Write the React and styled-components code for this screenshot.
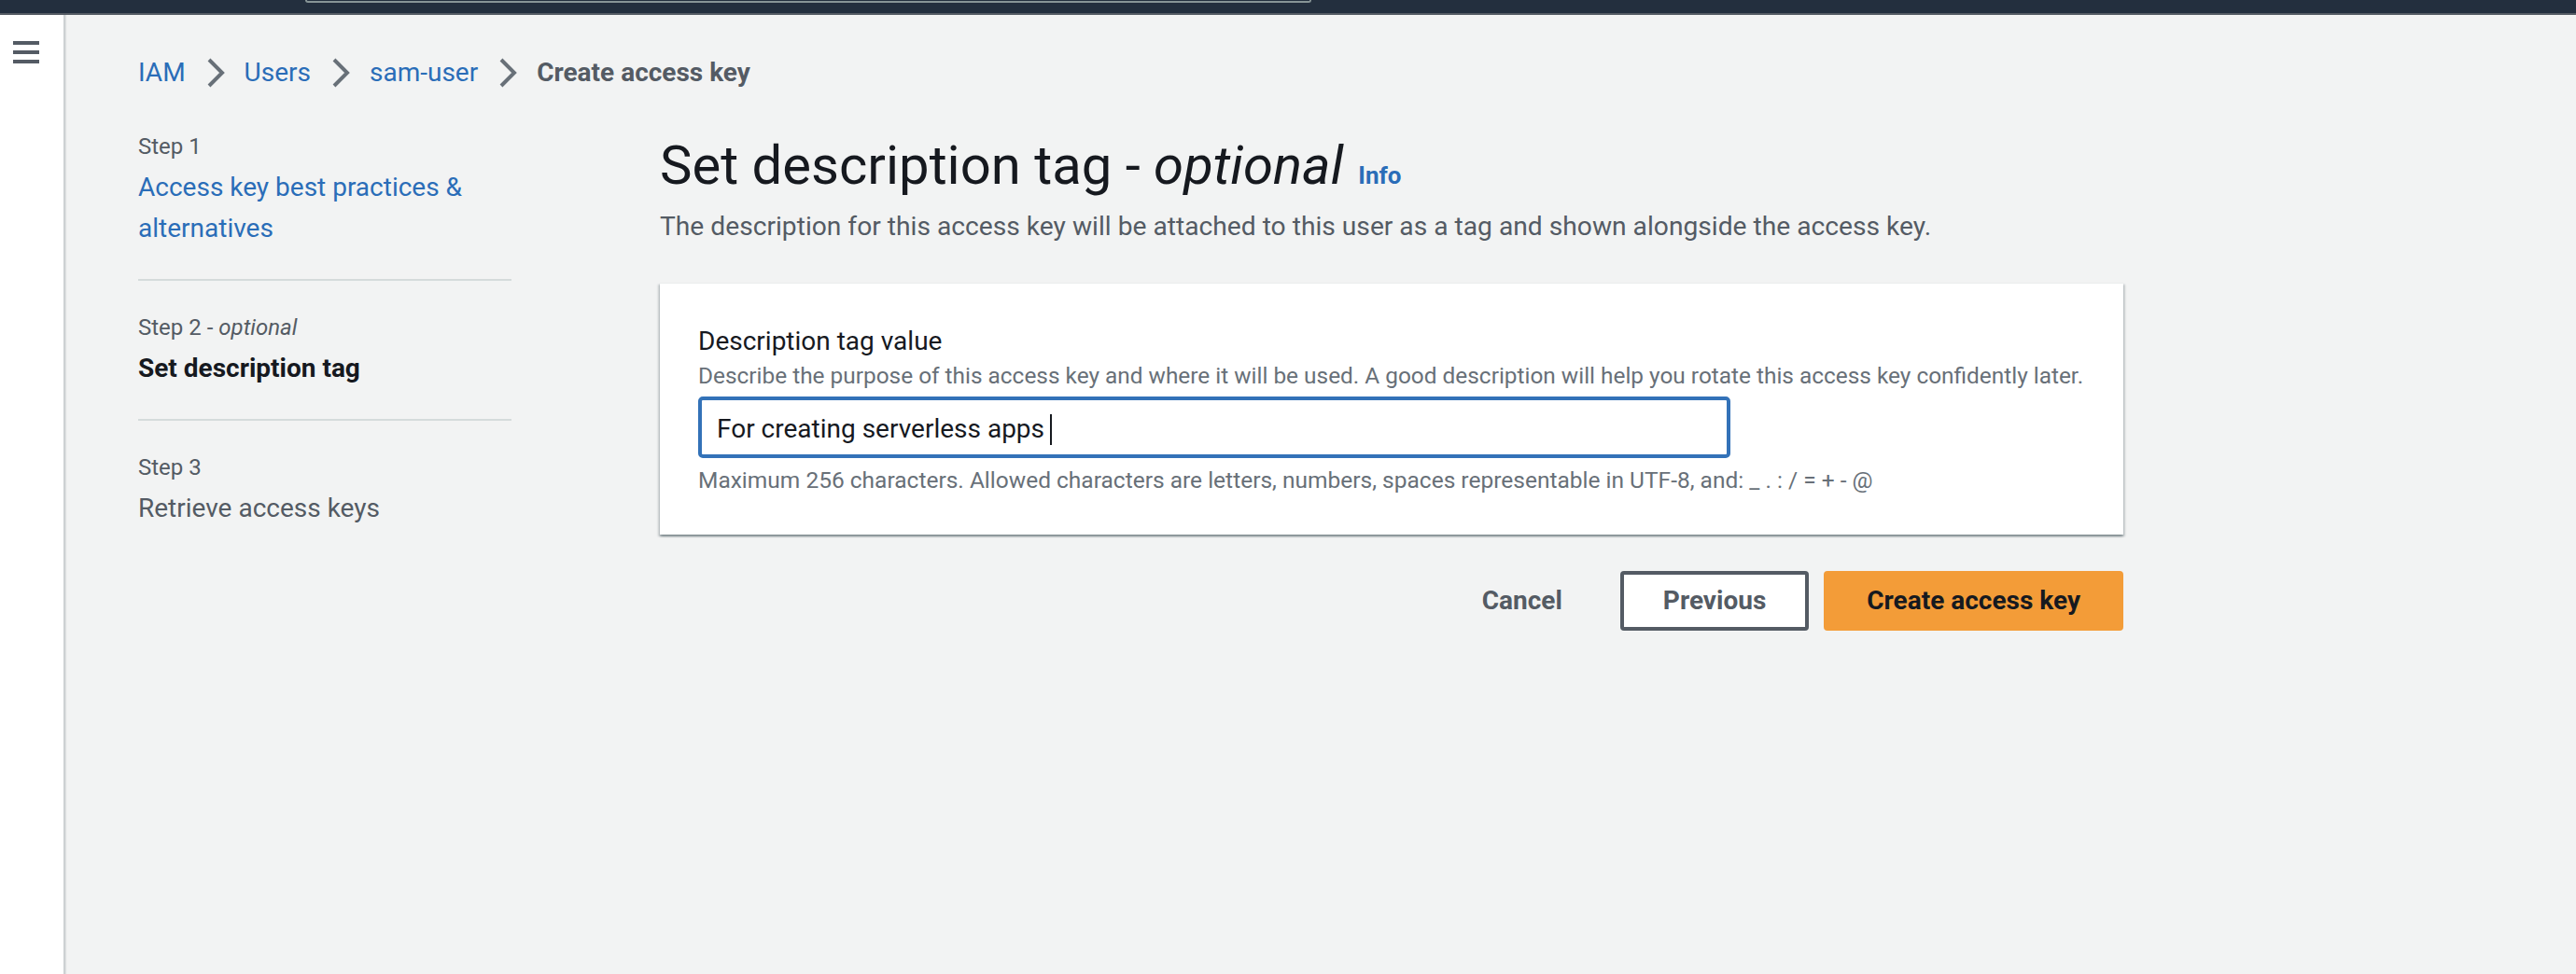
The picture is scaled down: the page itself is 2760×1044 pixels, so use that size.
import React from "react";
import styled, { createGlobalStyle } from "styled-components";

const Global = createGlobalStyle`
  html, body { margin: 0; padding: 0; height: 100%; }
  body {
    background: #f2f3f3;
    font-family: Roboto, "Liberation Sans", Arial, sans-serif;
    color: #16191f;
  }
  #root { min-height: 100vh; }
  * { box-sizing: border-box; }
`;

const Page = styled.div`
  display: flex;
  flex-direction: column;
  min-height: 100vh;
`;

const TopBar = styled.header`
  height: 16px;
  background: #232f3e;
  border-bottom: 2px solid #545b64;
  display: flex;
  align-items: flex-start;
  flex-shrink: 0;
`;

const SearchStub = styled.div`
  margin-left: 327px;
  width: 1078px;
  height: 3px;
  border: 2px solid #879596;
  border-top: none;
  border-radius: 0 0 6px 6px;
`;

const Body = styled.div`
  flex: 1;
  display: flex;
`;

const SideRail = styled.aside`
  width: 70px;
  flex-shrink: 0;
  background: #ffffff;
  border-right: 2px solid #cdd1d3;
  box-shadow: 1px 0 1px rgba(0, 28, 36, 0.08);
  padding: 28px 0 0 14px;
`;

const MenuButton = styled.button`
  display: block;
  border: none;
  background: none;
  padding: 0;
  cursor: pointer;
`;

const Main = styled.main`
  flex: 1;
  padding: 40px 0 0 78px;
`;

const Breadcrumbs = styled.nav`
  display: flex;
  align-items: center;
  font-size: 28px;
  line-height: 44px;
`;

const Crumb = styled.a`
  color: ${(p) => (p.$current ? "#545b64" : "#2a6db8")};
  font-weight: ${(p) => (p.$current ? 700 : 400)};
  text-decoration: none;
`;

const CrumbSep = styled.svg`
  width: 20px;
  height: 32px;
  margin: 0 21px 0 22px;
  flex-shrink: 0;
`;

const Wizard = styled.div`
  display: grid;
  grid-template-columns: 400px 1568px;
  column-gap: 159px;
  margin-top: 41px;
  align-items: start;
`;

const StepList = styled.ol`
  list-style: none;
  margin: 0;
  padding: 0;
`;

const StepItem = styled.li`
  padding: ${(p) => (p.$first ? "0" : "34px")} 0 ${(p) => (p.$last ? "0" : "32px")};
  border-bottom: ${(p) => (p.$last ? "none" : "2px solid #d5dbdb")};
`;

const StepLabel = styled.div`
  font-size: 24px;
  line-height: 32px;
  color: #545b64;
  em { font-style: italic; }
`;

const StepTitle = styled.div`
  margin-top: 6px;
  font-size: 28px;
  line-height: 44px;
  color: ${(p) => (p.$state === "link" ? "#2a6db8" : p.$state === "active" ? "#16191f" : "#545b64")};
  font-weight: ${(p) => (p.$state === "active" ? 700 : 400)};
`;

const Content = styled.section`
  min-width: 0;
`;

const Heading = styled.h1`
  margin: 0;
  font-size: 58px;
  line-height: 72px;
  font-weight: 400;
  color: #16191f;
  em { font-style: italic; }
`;

const InfoLink = styled.a`
  margin-left: 16px;
  font-size: 26px;
  font-weight: 700;
  color: #2a6db8;
  text-decoration: none;
`;

const HeaderDescription = styled.p`
  margin: -1px 0 0;
  font-size: 28.2px;
  line-height: 40px;
  color: #545b64;
`;

const Card = styled.div`
  margin-top: 40px;
  background: #ffffff;
  border-top: 1px solid #eaeded;
  padding: 40px 40px 42px 41px;
  box-shadow: 0 2px 2px 0 rgba(0, 28, 36, 0.3), 2px 2px 2px 0 rgba(0, 28, 36, 0.15),
    -2px 2px 2px 0 rgba(0, 28, 36, 0.15);
`;

const FieldLabel = styled.label`
  display: block;
  font-size: 28px;
  line-height: 44px;
  color: #16191f;
`;

const FieldDescription = styled.div`
  margin-top: -1px;
  font-size: 24.4px;
  line-height: 32px;
  color: #687078;
`;

const FakeInput = styled.div`
  margin-top: 6px;
  width: 1106px;
  height: 66px;
  border: 4px solid #3372b8;
  border-radius: 5px;
  padding: 4px 16px 0;
  display: flex;
  align-items: center;
  font-size: 28px;
  line-height: 44px;
  color: #16191f;
  background: #ffffff;
`;

const Caret = styled.span`
  display: inline-block;
  width: 2px;
  height: 33px;
  margin-left: 6px;
  background: #16191f;
`;

const Constraint = styled.div`
  margin-top: 8px;
  font-size: 24.5px;
  line-height: 32px;
  color: #687078;
`;

const Actions = styled.div`
  margin-top: 39px;
  display: flex;
  justify-content: flex-end;
  align-items: center;
  gap: 16px;
`;

const Button = styled.button`
  height: 64px;
  padding: 0 42px;
  border-radius: 4px;
  border: 4px solid
    ${(p) => (p.$variant === "primary" ? "#f39c38" : p.$variant === "normal" ? "#545b64" : "transparent")};
  background: ${(p) => (p.$variant === "primary" ? "#f39c38" : p.$variant === "normal" ? "#ffffff" : "transparent")};
  color: ${(p) => (p.$variant === "primary" ? "#16191f" : "#545b64")};
  font-family: inherit;
  font-size: 28px;
  font-weight: 700;
  line-height: 56px;
  cursor: pointer;
`;

const Chevron = () => (
  <CrumbSep viewBox="0 0 20 32" aria-hidden="true">
    <polyline points="3,2 17,16 3,30" fill="none" stroke="#687078" strokeWidth="4" strokeLinejoin="miter" />
  </CrumbSep>
);

const steps = [
  { label: "Step 1", title: "Access key best practices & alternatives", state: "link" },
  { label: "Step 2", optional: true, title: "Set description tag", state: "active" },
  { label: "Step 3", title: "Retrieve access keys", state: "disabled" },
];

export default function App() {
  return (
    <>
      <Global />
      <Page>
        <TopBar>
          <SearchStub />
        </TopBar>
        <Body>
          <SideRail>
            <MenuButton aria-label="Open navigation">
              <svg width="28" height="24" viewBox="0 0 28 24" aria-hidden="true">
                <rect x="0" y="0" width="28" height="4" fill="#545b64" />
                <rect x="0" y="10" width="28" height="4" fill="#545b64" />
                <rect x="0" y="20" width="28" height="4" fill="#545b64" />
              </svg>
            </MenuButton>
          </SideRail>
          <Main>
            <Breadcrumbs>
              <Crumb href="#">IAM</Crumb>
              <Chevron />
              <Crumb href="#">Users</Crumb>
              <Chevron />
              <Crumb href="#">sam-user</Crumb>
              <Chevron />
              <Crumb $current>Create access key</Crumb>
            </Breadcrumbs>
            <Wizard>
              <StepList>
                {steps.map((s, i) => (
                  <StepItem key={s.label} $first={i === 0} $last={i === steps.length - 1}>
                    <StepLabel>
                      {s.label}
                      {s.optional && (
                        <>
                          {" - "}
                          <em>optional</em>
                        </>
                      )}
                    </StepLabel>
                    <StepTitle $state={s.state}>{s.title}</StepTitle>
                  </StepItem>
                ))}
              </StepList>
              <Content>
                <Heading>
                  Set description tag - <em>optional</em>
                  <InfoLink href="#">Info</InfoLink>
                </Heading>
                <HeaderDescription>
                  The description for this access key will be attached to this user as a tag and shown alongside the access key.
                </HeaderDescription>
                <Card>
                  <FieldLabel>Description tag value</FieldLabel>
                  <FieldDescription>
                    Describe the purpose of this access key and where it will be used. A good description will help you rotate this access key confidently later.
                  </FieldDescription>
                  <FakeInput role="textbox">
                    <span>For creating serverless apps</span>
                    <Caret />
                  </FakeInput>
                  <Constraint>
                    Maximum 256 characters. Allowed characters are letters, numbers, spaces representable in UTF-8, and: _ . : / = + - @
                  </Constraint>
                </Card>
                <Actions>
                  <Button $variant="link">Cancel</Button>
                  <Button $variant="normal">Previous</Button>
                  <Button $variant="primary">Create access key</Button>
                </Actions>
              </Content>
            </Wizard>
          </Main>
        </Body>
      </Page>
    </>
  );
}
